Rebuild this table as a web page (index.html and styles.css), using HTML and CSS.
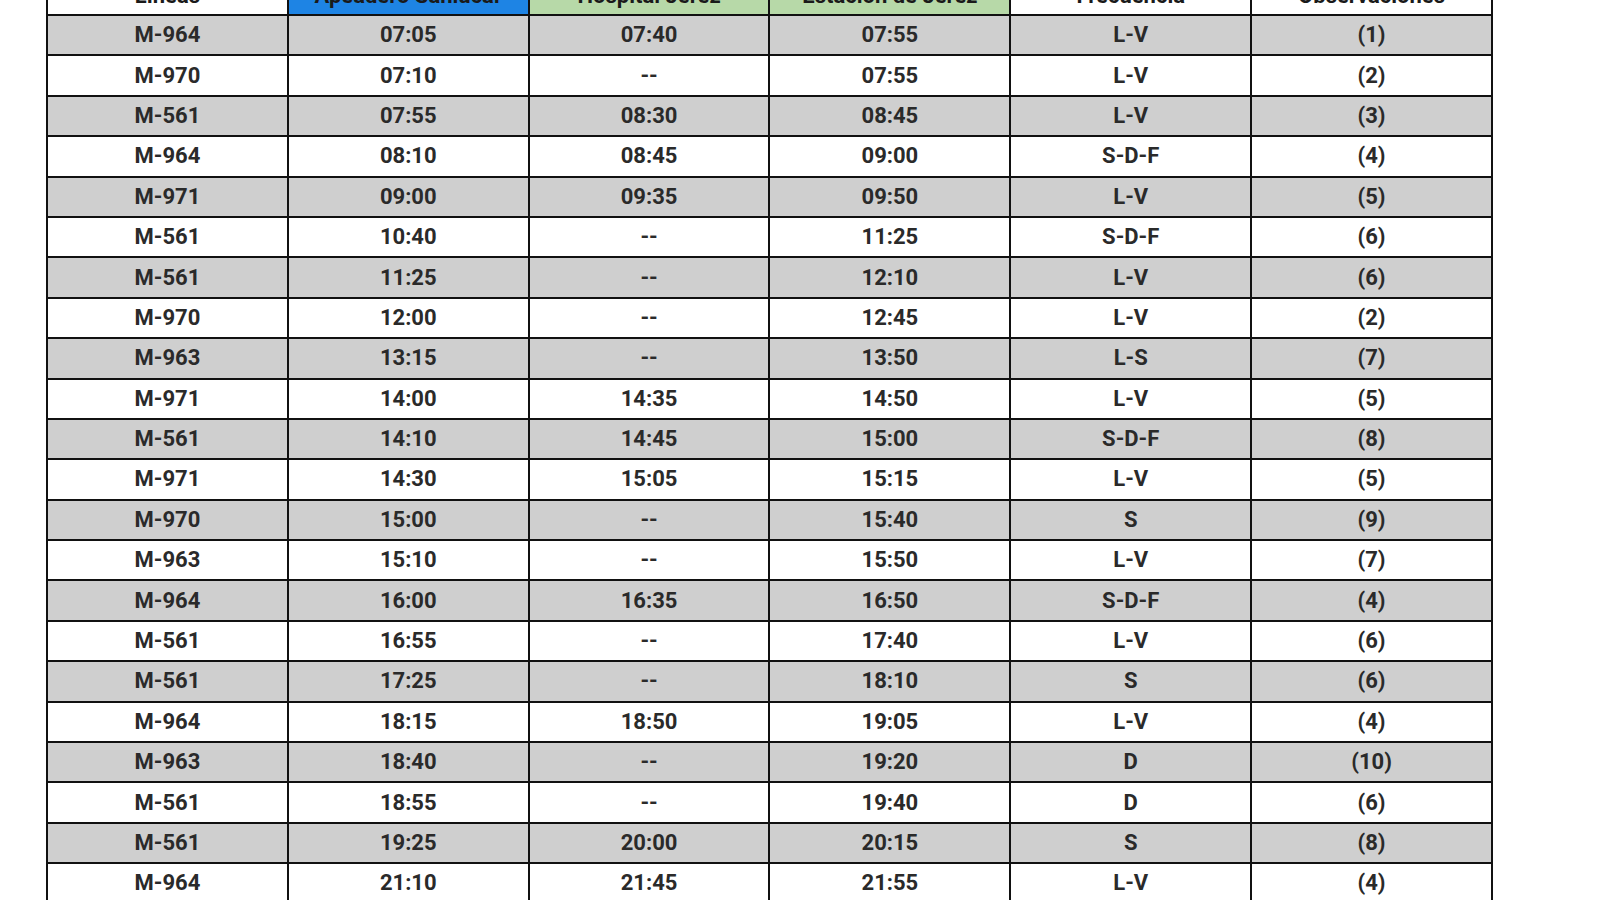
FILE: index.html
```html
<!DOCTYPE html>
<html lang="es">
<head>
<meta charset="utf-8">
<title>Horarios</title>
<link rel="stylesheet" href="styles.css">
</head>
<body>
<div class="page">
<table class="schedule">
<thead>
<tr>
<th class="h-white">Líneas</th>
<th class="h-blue">Apeadero Sanlúcar</th>
<th class="h-green">Hospital Jerez</th>
<th class="h-green">Estación de Jerez</th>
<th class="h-white">Frecuencia</th>
<th class="h-white">Observaciones</th>
</tr>
</thead>
<tbody>
<tr class="g"><td>M-964</td><td>07:05</td><td>07:40</td><td>07:55</td><td>L-V</td><td>(1)</td></tr>
<tr><td>M-970</td><td>07:10</td><td>--</td><td>07:55</td><td>L-V</td><td>(2)</td></tr>
<tr class="g"><td>M-561</td><td>07:55</td><td>08:30</td><td>08:45</td><td>L-V</td><td>(3)</td></tr>
<tr><td>M-964</td><td>08:10</td><td>08:45</td><td>09:00</td><td>S-D-F</td><td>(4)</td></tr>
<tr class="g"><td>M-971</td><td>09:00</td><td>09:35</td><td>09:50</td><td>L-V</td><td>(5)</td></tr>
<tr><td>M-561</td><td>10:40</td><td>--</td><td>11:25</td><td>S-D-F</td><td>(6)</td></tr>
<tr class="g"><td>M-561</td><td>11:25</td><td>--</td><td>12:10</td><td>L-V</td><td>(6)</td></tr>
<tr><td>M-970</td><td>12:00</td><td>--</td><td>12:45</td><td>L-V</td><td>(2)</td></tr>
<tr class="g"><td>M-963</td><td>13:15</td><td>--</td><td>13:50</td><td>L-S</td><td>(7)</td></tr>
<tr><td>M-971</td><td>14:00</td><td>14:35</td><td>14:50</td><td>L-V</td><td>(5)</td></tr>
<tr class="g"><td>M-561</td><td>14:10</td><td>14:45</td><td>15:00</td><td>S-D-F</td><td>(8)</td></tr>
<tr><td>M-971</td><td>14:30</td><td>15:05</td><td>15:15</td><td>L-V</td><td>(5)</td></tr>
<tr class="g"><td>M-970</td><td>15:00</td><td>--</td><td>15:40</td><td>S</td><td>(9)</td></tr>
<tr><td>M-963</td><td>15:10</td><td>--</td><td>15:50</td><td>L-V</td><td>(7)</td></tr>
<tr class="g"><td>M-964</td><td>16:00</td><td>16:35</td><td>16:50</td><td>S-D-F</td><td>(4)</td></tr>
<tr><td>M-561</td><td>16:55</td><td>--</td><td>17:40</td><td>L-V</td><td>(6)</td></tr>
<tr class="g"><td>M-561</td><td>17:25</td><td>--</td><td>18:10</td><td>S</td><td>(6)</td></tr>
<tr><td>M-964</td><td>18:15</td><td>18:50</td><td>19:05</td><td>L-V</td><td>(4)</td></tr>
<tr class="g"><td>M-963</td><td>18:40</td><td>--</td><td>19:20</td><td>D</td><td>(10)</td></tr>
<tr><td>M-561</td><td>18:55</td><td>--</td><td>19:40</td><td>D</td><td>(6)</td></tr>
<tr class="g"><td>M-561</td><td>19:25</td><td>20:00</td><td>20:15</td><td>S</td><td>(8)</td></tr>
<tr><td>M-964</td><td>21:10</td><td>21:45</td><td>21:55</td><td>L-V</td><td>(4)</td></tr>
</tbody>
</table>
</div>
</body>
</html>
```

FILE: styles.css
```css
html, body {
  margin: 0;
  padding: 0;
  background: #ffffff;
}

body {
  font-family: Roboto, "Liberation Sans", Arial, sans-serif;
  color: #2a2a2a;
  overflow: hidden;
  height: 900px;
}

.page {
  padding-left: 46px;
}

.schedule {
  margin-top: -27px;
  width: 1447px;
  table-layout: fixed;
  border-collapse: collapse;
  font-size: 22px;
  font-weight: 700;
}

.schedule th,
.schedule td {
  border: 2px solid #111111;
  text-align: center;
  padding: 0;
}

.schedule th {
  height: 32px;
  vertical-align: bottom;
  padding-bottom: 7px;
  line-height: 22px;
  color: #1a1a1a;
}

.schedule td {
  height: 38.4px;
  vertical-align: middle;
  line-height: 22px;
}

.h-white { background: #ffffff; }
.h-blue { background: #1e84e4; }
.h-green { background: #b7d9a8; }

.schedule tr.g td {
  background: #cfcfcf;
}
```
